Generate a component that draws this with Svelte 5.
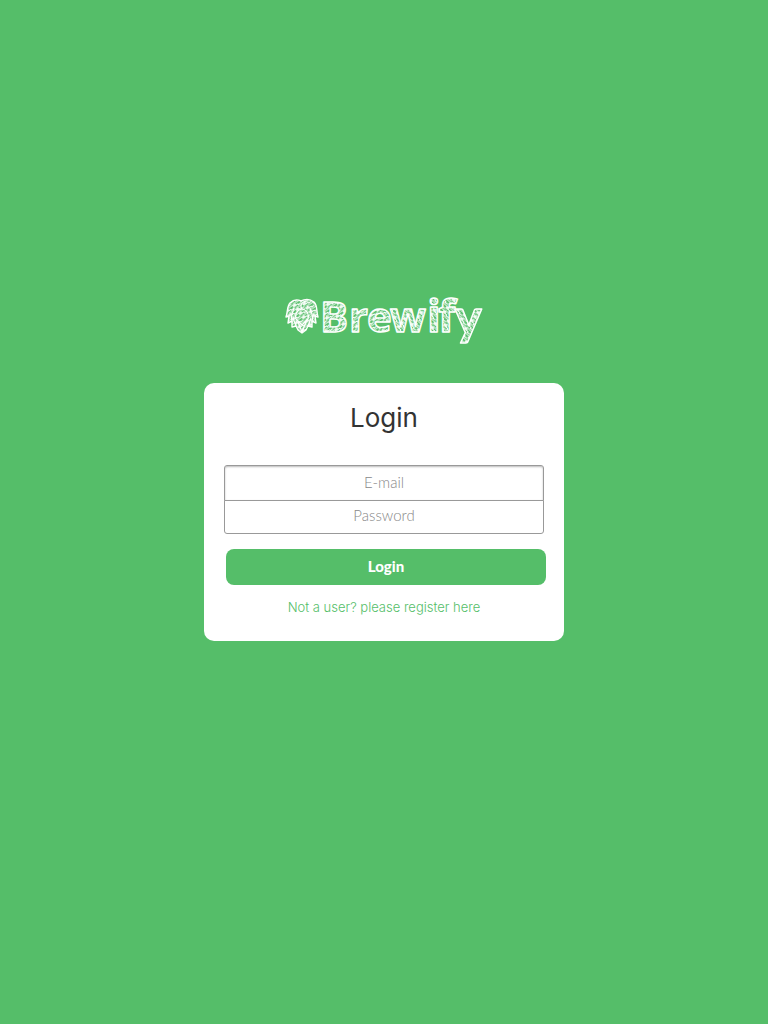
<script>
  let email = $state('');
  let password = $state('');
</script>

<main>
  <header>
    <svg viewBox="0 -16 200 76" role="img" aria-label="Brewify">
      <defs>
        <pattern id="hatch" width="9" height="5" patternUnits="userSpaceOnUse" patternTransform="rotate(-38)">
          <path d="M0 .8L6 .4M5 1.6L9 1.2M0 3.2L3 3.5M2 2.8L9 3.3M0 4.6L4 4.3" fill="none" stroke="#fff" stroke-width="1" />
        </pattern>
        <pattern id="hatch-steep" width="9" height="5" patternUnits="userSpaceOnUse" patternTransform="rotate(38)">
          <path d="M0 .8L6 .4M5 1.6L9 1.2M0 3.2L3 3.5M2 2.8L9 3.3M0 4.6L4 4.3" fill="none" stroke="#fff" stroke-width="1" />
        </pattern>
      </defs>
      <g class="hop">
        <path d="M17 6C13 4 9 5 6 8C3 11 4 16 2 22L5 21L4 28L8 26L8 32L12 31L14 35L18 38L22 35L24 31L28 32L28 26L32 28L31 21L34 22C32 16 34 11 30 7C26 4 21 4 17 6Z" />
        <path class="lines" d="M18 14C15 9 19 6 24 6M18 14C12 15 11 20 12 24L18 30L24 24C25 20 24 15 18 14M8 26C6 22 9 17 10 13M28 26C30 22 27 17 26 13M12 31L9 23M24 31L27 23M14 27L18 37L22 27" />
      </g>
      <text y="37"><tspan class="down" x="36 65 83">Bre</tspan><tspan class="up" x="106">w</tspan><tspan class="up tall" x="143 154">if</tspan><tspan class="up tail" x="171" y="40">y</tspan></text>
    </svg>
  </header>

  <section aria-labelledby="title">
    <h1 id="title">Login</h1>
    <form onsubmit={(event) => event.preventDefault()}>
      <input class="email" type="email" placeholder="E-mail" aria-label="E-mail" bind:value={email} />
      <input class="password" type="password" placeholder="Password" aria-label="Password" bind:value={password} />
      <button type="submit">Login</button>
    </form>
    <a href="#register">Not a user? please register here</a>
  </section>
</main>

<style>
  :global(body) {
    margin: 0;
    background: #55be69;
  }

  main {
    box-sizing: border-box;
    display: grid;
    grid-template-rows: 1fr auto 1fr;
    justify-items: center;
    min-height: 100vh;
    font-family: Lato, sans-serif;
  }

  header {
    align-self: end;
    padding: 16px 0 28px;
  }

  svg {
    display: block;
    width: 200px;
    overflow: visible;
  }

  text {
    font: 700 42px "Open Sans", sans-serif;
    stroke: #fff;
    stroke-width: 1.4;
    stroke-linejoin: round;
  }

  .down {
    fill: url(#hatch);
  }

  .up {
    fill: url(#hatch-steep);
  }

  .tall {
    font-size: 45px;
  }

  .tail {
    font-family: Lato, sans-serif;
    font-size: 50px;
    font-weight: 900;
  }

  .hop path {
    fill: url(#hatch);
    stroke: #fff;
    stroke-width: 1.4;
    stroke-linejoin: round;
    stroke-linecap: round;
  }

  .hop .lines {
    fill: none;
    stroke-width: 1.2;
  }

  section {
    box-sizing: border-box;
    width: min(360px, 100%);
    padding: 18px 20px 24px;
    border-radius: 10px;
    background: #fff;
    text-align: center;
  }

  h1 {
    margin: 0 0 30px;
    color: #333;
    font: 400 26px/34px Inter, sans-serif;
  }

  form {
    display: flex;
    flex-direction: column;
  }

  input {
    box-sizing: border-box;
    width: 100%;
    margin: 0;
    padding: 0 8px 2px;
    border: 1px solid #999;
    background: #fff;
    color: #333;
    font: 300 15px Lato, sans-serif;
    text-align: center;
    outline: none;
  }

  input::placeholder {
    color: #888;
    opacity: 1;
  }

  .email {
    height: 36px;
    border-radius: 3px 3px 0 0;
    box-shadow: inset 0 1px 2px #bbb;
  }

  .password {
    height: 34px;
    margin-top: -1px;
    padding-bottom: 4px;
    border-radius: 0 0 3px 3px;
  }

  button {
    width: 100%;
    height: 36px;
    margin: 15px 0 12px;
    padding: 0 0 2px;
    position: relative;
    left: 2px;
    border: 0;
    border-radius: 8px;
    background: #55be69;
    color: #fff;
    font: 900 15px Lato, sans-serif;
    cursor: pointer;
  }

  a {
    display: block;
    color: #55be69;
    font: 300 13px/20px Inter, sans-serif;
    text-decoration: none;
  }
</style>
